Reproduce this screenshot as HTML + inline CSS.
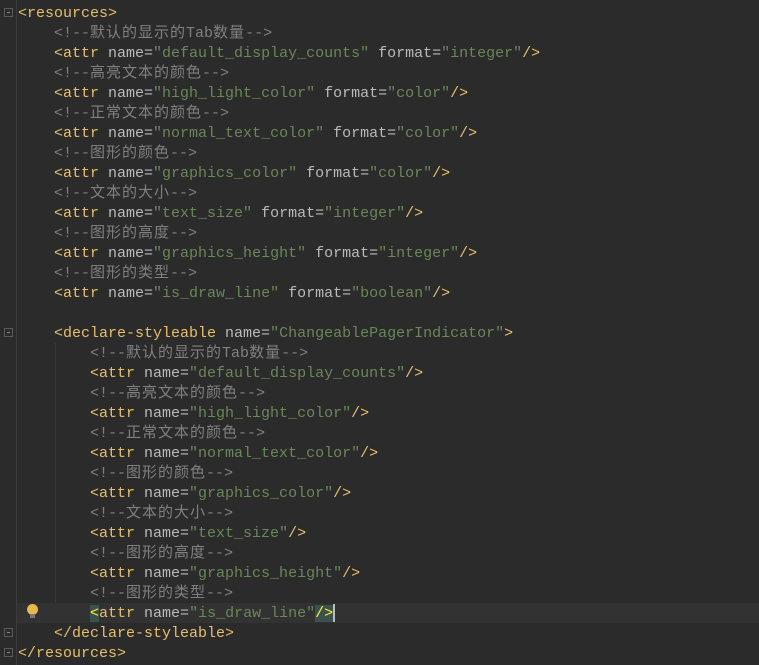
<!DOCTYPE html>
<html><head><meta charset="utf-8"><style>
body{margin:0;width:759px;height:665px;background:#2b2b2b;overflow:hidden;position:relative;font-family:"Liberation Mono","Noto Sans CJK SC",monospace;font-size:15px}
.gl{position:absolute;left:16px;top:0;width:1px;height:665px;background:#3c3c3c}
.ig{position:absolute;width:1px;background:#373737}
.l{position:absolute;left:18px;height:20px;line-height:20px;white-space:pre;color:#a9b7c6;margin-top:1px}
.t{color:#e8bf6a}.a{color:#bababa}.v{color:#6a8759}.c{color:#808080}
.k{letter-spacing:1px}
.cur{position:absolute;left:17px;right:0;top:603px;height:20px;background:#323232}
.hl{background:#3b514d;color:#ffef28}
.f{position:absolute;left:4px;width:9px;height:9px;border:1px solid #5a5a5a;box-sizing:border-box}
.f:after{content:"";position:absolute;left:2px;top:3px;width:3px;height:1px;background:#888}
.bulb{position:absolute;left:27px;top:604px;width:11px;height:11px;border-radius:50%;background:#e9b74a}
.bb{position:absolute;left:30px;top:614px;width:5px;height:4px;background:#777}
</style></head><body>
<div class="gl"></div>
<div class="ig" style="left:55px;top:343px;height:280px"></div>
<div class="cur"></div>
<div class="f" style="top:8px"></div>
<div class="f" style="top:328px"></div>
<div class="f" style="top:628px"></div>
<div class="f" style="top:648px"></div>
<div class="bulb"></div><div class="bb"></div>
<div class="l" style="top:3px"><span class="t">&lt;resources&gt;</span></div>
<div class="l" style="top:23px"><span class="c">    &lt;!--<span class="k">默认的显示的</span>Tab<span class="k">数量</span>--&gt;</span></div>
<div class="l" style="top:43px">    <span class="t">&lt;attr </span><span class="a">name=</span><span class="v">"default_display_counts"</span> <span class="a">format=</span><span class="v">"integer"</span><span class="t">/&gt;</span></div>
<div class="l" style="top:63px"><span class="c">    &lt;!--<span class="k">高亮文本的颜色</span>--&gt;</span></div>
<div class="l" style="top:83px">    <span class="t">&lt;attr </span><span class="a">name=</span><span class="v">"high_light_color"</span> <span class="a">format=</span><span class="v">"color"</span><span class="t">/&gt;</span></div>
<div class="l" style="top:103px"><span class="c">    &lt;!--<span class="k">正常文本的颜色</span>--&gt;</span></div>
<div class="l" style="top:123px">    <span class="t">&lt;attr </span><span class="a">name=</span><span class="v">"normal_text_color"</span> <span class="a">format=</span><span class="v">"color"</span><span class="t">/&gt;</span></div>
<div class="l" style="top:143px"><span class="c">    &lt;!--<span class="k">图形的颜色</span>--&gt;</span></div>
<div class="l" style="top:163px">    <span class="t">&lt;attr </span><span class="a">name=</span><span class="v">"graphics_color"</span> <span class="a">format=</span><span class="v">"color"</span><span class="t">/&gt;</span></div>
<div class="l" style="top:183px"><span class="c">    &lt;!--<span class="k">文本的大小</span>--&gt;</span></div>
<div class="l" style="top:203px">    <span class="t">&lt;attr </span><span class="a">name=</span><span class="v">"text_size"</span> <span class="a">format=</span><span class="v">"integer"</span><span class="t">/&gt;</span></div>
<div class="l" style="top:223px"><span class="c">    &lt;!--<span class="k">图形的高度</span>--&gt;</span></div>
<div class="l" style="top:243px">    <span class="t">&lt;attr </span><span class="a">name=</span><span class="v">"graphics_height"</span> <span class="a">format=</span><span class="v">"integer"</span><span class="t">/&gt;</span></div>
<div class="l" style="top:263px"><span class="c">    &lt;!--<span class="k">图形的类型</span>--&gt;</span></div>
<div class="l" style="top:283px">    <span class="t">&lt;attr </span><span class="a">name=</span><span class="v">"is_draw_line"</span> <span class="a">format=</span><span class="v">"boolean"</span><span class="t">/&gt;</span></div>
<div class="l" style="top:323px">    <span class="t">&lt;declare-styleable </span><span class="a">name=</span><span class="v">"ChangeablePagerIndicator"</span><span class="t">&gt;</span></div>
<div class="l" style="top:343px"><span class="c">        &lt;!--<span class="k">默认的显示的</span>Tab<span class="k">数量</span>--&gt;</span></div>
<div class="l" style="top:363px">        <span class="t">&lt;attr </span><span class="a">name=</span><span class="v">"default_display_counts"</span><span class="t">/&gt;</span></div>
<div class="l" style="top:383px"><span class="c">        &lt;!--<span class="k">高亮文本的颜色</span>--&gt;</span></div>
<div class="l" style="top:403px">        <span class="t">&lt;attr </span><span class="a">name=</span><span class="v">"high_light_color"</span><span class="t">/&gt;</span></div>
<div class="l" style="top:423px"><span class="c">        &lt;!--<span class="k">正常文本的颜色</span>--&gt;</span></div>
<div class="l" style="top:443px">        <span class="t">&lt;attr </span><span class="a">name=</span><span class="v">"normal_text_color"</span><span class="t">/&gt;</span></div>
<div class="l" style="top:463px"><span class="c">        &lt;!--<span class="k">图形的颜色</span>--&gt;</span></div>
<div class="l" style="top:483px">        <span class="t">&lt;attr </span><span class="a">name=</span><span class="v">"graphics_color"</span><span class="t">/&gt;</span></div>
<div class="l" style="top:503px"><span class="c">        &lt;!--<span class="k">文本的大小</span>--&gt;</span></div>
<div class="l" style="top:523px">        <span class="t">&lt;attr </span><span class="a">name=</span><span class="v">"text_size"</span><span class="t">/&gt;</span></div>
<div class="l" style="top:543px"><span class="c">        &lt;!--<span class="k">图形的高度</span>--&gt;</span></div>
<div class="l" style="top:563px">        <span class="t">&lt;attr </span><span class="a">name=</span><span class="v">"graphics_height"</span><span class="t">/&gt;</span></div>
<div class="l" style="top:583px"><span class="c">        &lt;!--<span class="k">图形的类型</span>--&gt;</span></div>
<div class="l" style="top:603px">        <span class="t"><span class="hl">&lt;</span>attr </span><span class="a">name=</span><span class="v">"is_draw_line"</span><span class="hl">/&gt;</span><span style="display:inline-block;width:2px;height:18px;vertical-align:middle;background:#bbb"></span></div>
<div class="l" style="top:623px">    <span class="t">&lt;/declare-styleable&gt;</span></div>
<div class="l" style="top:643px"><span class="t">&lt;/resources&gt;</span></div>
</body></html>
